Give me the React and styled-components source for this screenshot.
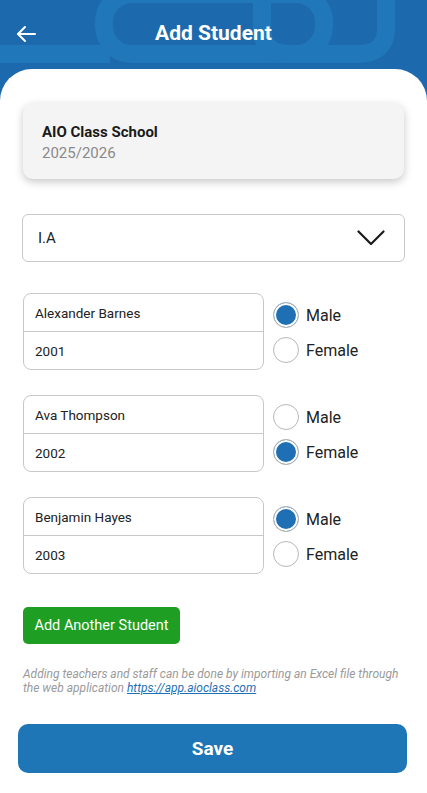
import React from 'react';
import styled, { createGlobalStyle } from 'styled-components';

const GlobalStyle = createGlobalStyle`
  html, body {
    margin: 0;
    padding: 0;
    background: #ffffff;
    font-family: Roboto, "Noto Sans", Arial, sans-serif;
  }
  * { box-sizing: border-box; }
`;

const Page = styled.div`
  width: 427px;
  min-height: 793px;
  background: #ffffff;
  overflow: hidden;
`;

const Header = styled.header`
  position: relative;
  height: 101px;
  background: #1c6aad;
  overflow: hidden;
`;

const HeaderDecor = styled.svg`
  position: absolute;
  left: 0;
  top: 0;
`;

const HeaderBar = styled.div`
  position: relative;
  height: 66px;
  display: flex;
  align-items: center;
  justify-content: center;
`;

const BackButton = styled.button`
  position: absolute;
  left: 12px;
  top: 20px;
  width: 28px;
  height: 28px;
  padding: 0;
  border: none;
  background: transparent;
  display: flex;
  align-items: center;
  justify-content: center;
`;

const Title = styled.h1`
  margin: 0;
  color: #ffffff;
  font-size: 21px;
  font-weight: 700;
`;

const Sheet = styled.main`
  position: relative;
  margin-top: -32px;
  background: #ffffff;
  border-radius: 32px 32px 0 0;
  padding: 34px 23px 20px;
  display: flex;
  flex-direction: column;
`;

const SchoolCard = styled.div`
  height: 76px;
  background: #f4f4f4;
  border-radius: 10px;
  box-shadow: 0 3px 8px rgba(0, 0, 0, 0.22);
  padding: 2px 19px 0;
  display: flex;
  flex-direction: column;
  justify-content: center;
  gap: 3px;
`;

const SchoolName = styled.div`
  font-size: 15px;
  font-weight: 700;
  color: #1a1a1a;
`;

const SchoolYear = styled.div`
  font-size: 15px;
  color: #8a8a8a;
`;

const Select = styled.div`
  margin: 35px -1px 0;
  height: 48px;
  border: 1px solid #c8c8c8;
  border-radius: 6px;
  padding: 0 19px 0 15px;
  display: flex;
  align-items: center;
  justify-content: space-between;
  font-size: 15px;
  color: #222;
`;

const StudentList = styled.div`
  margin-top: 31px;
  display: flex;
  flex-direction: column;
  gap: 25px;
`;

const StudentRow = styled.div`
  display: flex;
  align-items: flex-start;
  gap: 9px;
`;

const Fields = styled.div`
  width: 241px;
  border: 1px solid #c8c8c8;
  border-radius: 8px;
  display: flex;
  flex-direction: column;
`;

const Field = styled.div`
  height: ${p => p.$h}px;
  padding: 0 11px;
  display: flex;
  align-items: center;
  font-size: 13.5px;
  color: #222;
  border-top: ${p => (p.$divider ? '1px solid #c8c8c8' : 'none')};
`;

const Radios = styled.div`
  padding-top: 9px;
  display: flex;
  flex-direction: column;
  gap: 9px;
`;

const RadioOption = styled.label`
  display: flex;
  align-items: center;
  gap: 7px;
  font-size: 16px;
  color: #222;
`;

const RadioCircle = styled.span`
  width: 26px;
  height: 26px;
  border-radius: 50%;
  border: 1px solid #b8b8b8;
  background: ${p => (p.$checked ? '#1f6fb4' : '#ffffff')};
  box-shadow: ${p => (p.$checked ? 'inset 0 0 0 2px #ffffff' : 'none')};
  flex-shrink: 0;
`;

const AddButton = styled.button`
  margin-top: 33px;
  align-self: flex-start;
  width: 157px;
  height: 37px;
  border: none;
  border-radius: 5px;
  background: #1e9e22;
  color: #ffffff;
  font-family: Roboto, Arial, sans-serif;
  font-size: 14.5px;
  padding: 0;
`;

const Note = styled.p`
  margin: 23px 0 0;
  font-size: 12px;
  line-height: 14px;
  font-style: italic;
  color: #9a9a9a;
`;

const NoteLink = styled.a`
  color: #1f6fb4;
  text-decoration: underline;
`;

const SaveButton = styled.button`
  margin: 29px -3px 0 -5px;
  height: 49px;
  border: none;
  border-radius: 10px;
  background: #1f76b6;
  color: #ffffff;
  font-family: Roboto, Arial, sans-serif;
  font-size: 19px;
  font-weight: 700;
`;

const students = [
  { name: 'Alexander Barnes', year: '2001', gender: 'male' },
  { name: 'Ava Thompson', year: '2002', gender: 'female' },
  { name: 'Benjamin Hayes', year: '2003', gender: 'male' },
];

const Radio = ({ checked, label }) => (
  <RadioOption>
    <RadioCircle $checked={checked} />
    {label}
  </RadioOption>
);

export default function App() {
  return (
    <Page>
      <GlobalStyle />
      <Header>
        <HeaderDecor width="427" height="101" viewBox="0 0 427 101">
          <g fill="none" stroke="#2077b9" strokeWidth="18">
            <path d="M -10 54 H 110" />
            <rect x="104" y="-6" width="220" height="60" rx="28" />
            <path d="M 262 -20 V 28 Q 262 54 290 54 H 358 Q 386 54 386 28 V -20" />
          </g>
        </HeaderDecor>
        <HeaderBar>
          <BackButton aria-label="Back">
            <svg width="22" height="22" viewBox="0 0 22 22" fill="none" stroke="#ffffff" strokeWidth="2" strokeLinecap="round" strokeLinejoin="round">
              <path d="M 20 11 H 3" />
              <path d="M 10 4 L 3 11 L 10 18" />
            </svg>
          </BackButton>
          <Title>Add Student</Title>
        </HeaderBar>
      </Header>
      <Sheet>
        <SchoolCard>
          <SchoolName>AIO Class School</SchoolName>
          <SchoolYear>2025/2026</SchoolYear>
        </SchoolCard>

        <Select>
          <span>I.A</span>
          <svg width="28" height="16" viewBox="0 0 28 16" fill="none" stroke="#1a1a1a" strokeWidth="2.2" strokeLinecap="round" strokeLinejoin="round">
            <path d="M 1.5 1.5 L 14 14 L 26.5 1.5" />
          </svg>
        </Select>

        <StudentList>
          {students.map(s => (
            <StudentRow key={s.year}>
              <Fields>
                <Field $h={37}>{s.name}</Field>
                <Field $h={38} $divider>{s.year}</Field>
              </Fields>
              <Radios>
                <Radio checked={s.gender === 'male'} label="Male" />
                <Radio checked={s.gender === 'female'} label="Female" />
              </Radios>
            </StudentRow>
          ))}
        </StudentList>

        <AddButton>Add Another Student</AddButton>

        <Note>
          Adding teachers and staff can be done by importing an Excel file through the web application{' '}
          <NoteLink href="#">https://app.aioclass.com</NoteLink>
        </Note>

        <SaveButton>Save</SaveButton>
      </Sheet>
    </Page>
  );
}
